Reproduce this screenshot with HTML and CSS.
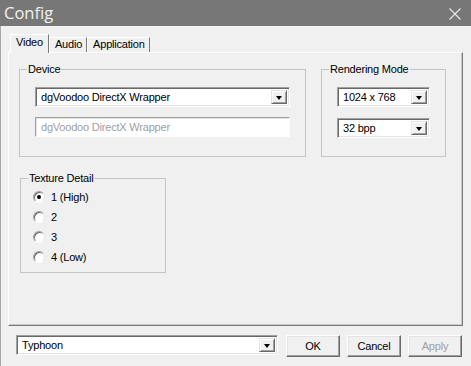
FILE: index.html
```html
<!DOCTYPE html>
<html lang="en">
<head>
    <meta charset="UTF-8">
    <title>Config</title>
    <link rel="stylesheet" href="styles.css">
</head>
<body>
    <div class="window">
        <div class="titlebar">
            <span class="title">Config</span>
            <svg class="close" width="12" height="12" viewBox="0 0 12 12">
                <path d="M0.5 0.5 L11.5 11.5 M11.5 0.5 L0.5 11.5" stroke="#e8e8e8" stroke-width="1.1" fill="none"/>
            </svg>
        </div>

        <div class="content">
            <div class="tabs">
                <div class="tab active">Video</div>
                <div class="tab">Audio</div>
                <div class="tab">Application</div>
            </div>

            <div class="panel">
                <div class="top-row">
                    <fieldset class="group device">
                        <legend>Device</legend>
                        <div class="combo wide">
                            <span class="combo-text">dgVoodoo DirectX Wrapper</span>
                            <span class="drop"></span>
                        </div>
                        <div class="edit disabled">dgVoodoo DirectX Wrapper</div>
                    </fieldset>

                    <fieldset class="group rendering">
                        <legend>Rendering Mode</legend>
                        <div class="combo small">
                            <span class="combo-text">1024 x 768</span>
                            <span class="drop"></span>
                        </div>
                        <div class="combo small second">
                            <span class="combo-text">32 bpp</span>
                            <span class="drop"></span>
                        </div>
                    </fieldset>
                </div>

                <fieldset class="group texture">
                    <legend>Texture Detail</legend>
                    <label class="radio checked"><span class="dot"></span>1 (High)</label>
                    <label class="radio"><span class="dot"></span>2</label>
                    <label class="radio"><span class="dot"></span>3</label>
                    <label class="radio"><span class="dot"></span>4 (Low)</label>
                </fieldset>
            </div>

            <div class="footer">
                <div class="combo profile">
                    <span class="combo-text">Typhoon</span>
                    <span class="drop"></span>
                </div>
                <div class="buttons">
                    <button>OK</button>
                    <button>Cancel</button>
                    <button disabled>Apply</button>
                </div>
            </div>
        </div>
    </div>
</body>
</html>
```

FILE: styles.css
```css
* {
    margin: 0;
    padding: 0;
    box-sizing: border-box;
}

body {
    width: 471px;
    height: 366px;
    overflow: hidden;
    background: #f0f0f0;
    font-family: "Liberation Sans", Arial, sans-serif;
    font-size: 11px;
    letter-spacing: -0.2px;
    color: #000;
}

.window {
    height: 366px;
    border-left: 1px solid #a8a8a8;
    background: #f0f0f0;
}

.titlebar {
    height: 26px;
    background: #777777;
    display: flex;
    align-items: center;
    justify-content: space-between;
    padding: 0 10px 0 4px;
    margin-left: -1px;
}

.title {
    font-family: "Open Sans", "Noto Sans", sans-serif;
    font-size: 16.5px;
    letter-spacing: 0;
    color: #f2f2f2;
    line-height: 26px;
}

.close {
    margin-top: 1px;
}

.content {
    padding: 8px 8px 0 7px;
}

/* tabs */
.tabs {
    display: flex;
    align-items: flex-end;
    height: 18px;
    padding-left: 2px;
    position: relative;
    z-index: 1;
}

.tab {
    height: 15px;
    line-height: 13px;
    padding: 0 4px 0 5px;
    background: #f0f0f0;
    border-left: 1px solid #fff;
    border-top: 1px solid #fff;
    border-right: 1px solid #7a7a7a;
}

.tab.active {
    height: 19px;
    line-height: 14px;
    padding: 0 5px;
    margin-bottom: -1px;
}

/* main panel */
.panel {
    height: 274px;
    border-top: 1px solid #fff;
    border-left: 1px solid #fff;
    border-right: 1px solid #7a7a7a;
    border-bottom: 1px solid #7a7a7a;
    box-shadow: inset -1px -1px 0 #c8c8c8;
    padding: 10px 0 0 10px;
}

.top-row {
    display: flex;
    gap: 15px;
}

.group {
    border: 1px solid #c4c4c4;
    border-radius: 0;
}

.group legend {
    padding: 0 1px;
    line-height: 13px;
}

.device {
    width: 286px;
    height: 94px;
    padding: 11px 15px 0 15px;
}

.device legend,
.rendering legend {
    margin-left: -8px;
}

.rendering {
    width: 124px;
    height: 94px;
    padding: 11px 15px 0 15px;
}

.texture {
    width: 146px;
    height: 101px;
    margin: 15px 0 0 1px;
    padding: 2px 0 0 12px;
}

.texture legend {
    margin-left: -5px;
}

/* combo boxes */
.combo {
    display: flex;
    height: 20px;
    background: #fff;
    border-top: 1px solid #a0a0a0;
    border-left: 1px solid #a0a0a0;
    border-right: 1px solid #fff;
    border-bottom: 1px solid #fff;
    box-shadow: inset 1px 1px 0 #696969, inset -1px -1px 0 #e3e3e3;
    padding: 2px;
}

.combo-text {
    flex: 1;
    padding-left: 3px;
    line-height: 14px;
    white-space: nowrap;
    overflow: hidden;
}

.drop {
    width: 16px;
    background: #f0f0f0;
    border-top: 1px solid #e3e3e3;
    border-left: 1px solid #e3e3e3;
    border-right: 1px solid #696969;
    border-bottom: 1px solid #696969;
    box-shadow: inset 1px 1px 0 #fff, inset -1px -1px 0 #a0a0a0;
    position: relative;
}

.drop::after {
    content: "";
    position: absolute;
    left: 4px;
    top: 5px;
    border-left: 3.5px solid transparent;
    border-right: 3.5px solid transparent;
    border-top: 4px solid #000;
}

.wide {
    width: 255px;
}

.small {
    width: 93px;
}

.small.second {
    margin-top: 11px;
}

.edit {
    width: 255px;
    height: 20px;
    margin-top: 10px;
    background: #fff;
    border-top: 1px solid #a0a0a0;
    border-left: 1px solid #a0a0a0;
    border-right: 1px solid #fff;
    border-bottom: 1px solid #fff;
    box-shadow: inset 1px 1px 0 #e3e3e3;
    padding: 2px 0 0 5px;
    line-height: 14px;
}

.edit.disabled {
    color: #a0a0a0;
}

/* radio buttons */
.radio {
    display: flex;
    align-items: center;
    height: 20px;
    gap: 6px;
}

.dot {
    width: 12px;
    height: 12px;
    border-radius: 50%;
    background: #fff;
    border: 1px solid;
    border-color: #a0a0a0 #e3e3e3 #fff #a0a0a0;
    box-shadow: inset 1px 1px 0 #696969;
    position: relative;
}

.radio.checked .dot::after {
    content: "";
    position: absolute;
    left: 3px;
    top: 3px;
    width: 4px;
    height: 4px;
    border-radius: 50%;
    background: #000;
}

/* footer */
.footer {
    display: flex;
    align-items: flex-start;
    margin-top: 9px;
    padding-left: 8px;
}

.profile {
    width: 262px;
    height: 20px;
}

.buttons {
    display: flex;
    gap: 7px;
    margin-left: 8px;
}

button {
    width: 54px;
    height: 22px;
    font-family: "Liberation Sans", Arial, sans-serif;
    font-size: 11px;
    letter-spacing: -0.2px;
    color: #000;
    background: #f0f0f0;
    border-top: 1px solid #fff;
    border-left: 1px solid #fff;
    border-right: 1px solid #696969;
    border-bottom: 1px solid #696969;
    box-shadow: inset -1px -1px 0 #a0a0a0, inset 1px 1px 0 #e3e3e3;
}

button:disabled {
    color: #a0a0a0;
}
```
